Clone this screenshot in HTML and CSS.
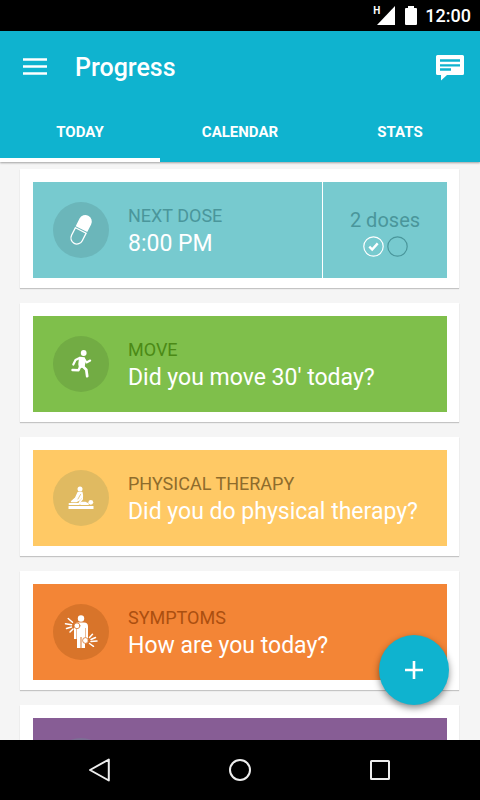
FILE: index.html
```html
<!DOCTYPE html>
<html lang="en">
<head>
  <meta charset="UTF-8">
  <meta name="viewport" content="width=device-width, initial-scale=1">
  <title>Progress</title>
  <link rel="stylesheet" href="styles.css">
</head>
<body>
  <!-- Status bar -->
  <div class="status-bar">
    <span class="network">H</span>
    <svg class="signal" width="18" height="19" viewBox="0 0 18 19"><path d="M18 0v19H0z" fill="#fff"/></svg>
    <svg class="battery" width="12" height="19" viewBox="0 0 12 19"><path d="M3 0h6v2h2q1 0 1 1v15q0 1-1 1H1q-1 0-1-1V3q0-1 1-1h2z" fill="#fff"/></svg>
    <span class="clock">12:00</span>
  </div>

  <header class="header">
    <div class="app-bar">
      <button class="icon-button" type="button" aria-label="Menu">
        <svg width="24" height="20" viewBox="0 0 24 20"><path d="M0 1.500h24M0 8.500h24M0 15.500h24" stroke="#fff" stroke-width="2.700"/></svg>
      </button>
      <h1>Progress</h1>
      <button class="icon-button" type="button" aria-label="Messages">
        <svg width="28" height="26" viewBox="0 0 28 26">
          <path d="M1.500 0h25Q28 0 28 1.500v17q0 1.500-1.500 1.500H11l-6 5.500V20H1.500Q0 20 0 18.500v-17Q0 0 1.500 0z" fill="#fff"/>
          <path d="M4 5.500h20M4 10.300h20M4 14.500h11" stroke="#0fb3cf" stroke-width="2.300"/>
        </svg>
      </button>
    </div>
    <nav class="tabs">
      <a class="tab active" href="#today">TODAY</a>
      <a class="tab" href="#calendar">CALENDAR</a>
      <a class="tab" href="#stats">STATS</a>
    </nav>
  </header>

  <main class="content" id="today">
    <!-- Next dose -->
    <section class="card">
      <div class="tile dose">
        <div class="badge">
          <svg width="56" height="56" viewBox="0 0 56 56">
            <g transform="rotate(27 28 28)">
              <path d="M21.500 27v-8.500a6.500 6.500 0 0 1 13 0V27z" fill="#fff"/>
              <path d="M22 28.500h12V37a6 6 0 0 1-12 0z" fill="none" stroke="#fff" stroke-width="1.300"/>
            </g>
          </svg>
        </div>
        <div class="text">
          <h2>NEXT DOSE</h2>
          <p>8:00 PM</p>
        </div>
        <div class="doses">
          <span class="doses-count">2 doses</span>
          <div class="doses-marks">
            <svg width="21" height="21" viewBox="0 0 21 21"><circle cx="10.500" cy="10.500" r="9.700" fill="none" stroke="#fff" stroke-width="1.200"/><path d="M6.300 10.700l2.900 2.900 5.500-6.200" fill="none" stroke="#fff" stroke-width="2.400"/></svg>
            <svg width="21" height="21" viewBox="0 0 21 21"><circle cx="10.500" cy="10.500" r="9.700" fill="none" stroke="#4a969b" stroke-width="1.200"/></svg>
          </div>
        </div>
      </div>
    </section>

    <!-- Move -->
    <section class="card">
      <div class="tile move">
        <div class="badge">
          <svg width="56" height="56" viewBox="0 0 56 56" fill="none" stroke="#fff" stroke-linecap="round" stroke-linejoin="round">
            <circle cx="30.700" cy="17" r="2.900" fill="#fff" stroke="none"/>
            <path d="M27 21.700l4 .5.300 5-.5 3-4 1-.5-3z" fill="#fff" stroke-width="2"/>
            <path d="M26.500 22l-4 2-2.200 4.500" stroke-width="2.200"/>
            <path d="M31 22.500l2.500 4 3.700-2" stroke-width="2"/>
            <path d="M27.500 30l-2 4.200-6-.2" stroke-width="2.400"/>
            <path d="M29.500 30l3.800 3.700.9 6.500" stroke-width="2.700"/>
          </svg>
        </div>
        <div class="text">
          <h2>MOVE</h2>
          <p>Did you move 30' today?</p>
        </div>
      </div>
    </section>

    <!-- Physical therapy -->
    <section class="card">
      <div class="tile therapy">
        <div class="badge">
          <svg width="56" height="56" viewBox="0 0 56 56" fill="none" stroke="#fff" stroke-linecap="round" stroke-linejoin="round">
            <circle cx="27" cy="19" r="2.500" fill="#fff" stroke="none"/>
            <path d="M25 22.500h4l.5 3.500-3 4-3 1.500h-5l4-3.500z" fill="#fff" stroke-width="1.300"/>
            <path d="M27.500 24.500l-2.500 4.500" stroke="#e0ba61" stroke-width=".8"/>
            <path d="M29 25l.3 4-2.800 3.500" stroke-width="1.500"/>
            <circle cx="37.800" cy="32.300" r="2.400" fill="#fff" stroke="none"/>
            <path d="M16.500 34h9l3-1.200h4l2.500 1.200H28" stroke-width="1.900"/>
            <path d="M15.500 37.500h25" stroke-width="3" stroke-linecap="butt"/>
          </svg>
        </div>
        <div class="text">
          <h2>PHYSICAL THERAPY</h2>
          <p>Did you do physical therapy?</p>
        </div>
      </div>
    </section>

    <!-- Symptoms -->
    <section class="card">
      <div class="tile symptoms">
        <div class="badge">
          <svg width="56" height="56" viewBox="0 0 56 56" fill="none" stroke="#fff" stroke-linecap="round">
            <circle cx="28" cy="14.500" r="3.200" fill="#fff" stroke="none"/>
            <path d="M25 18.500h6q4 0 4 4V35h-2.500V24H32v20h-3.500V33h-1v11H24V24h-.5v11H21V22.500q0-4 4-4z" fill="#fff" stroke="none"/>
            <circle cx="24" cy="21.800" r="2.900" fill="#fff" stroke="#d8742a" stroke-width=".8"/>
            <circle cx="32.500" cy="36.500" r="2.900" fill="#fff" stroke="#d8742a" stroke-width=".8"/>
            <path d="M19.500 18.300l-4.300-3.800M18.500 20.800l-6-1M18.500 23l-5 1.500M20 25l-3 3M36.500 33.500l3-3.300M38 35.500l4.500-2M38 37.500l6-.5M36.500 39.500l4 2.800" stroke-width="1.500"/>
          </svg>
        </div>
        <div class="text">
          <h2>SYMPTOMS</h2>
          <p>How are you today?</p>
        </div>
      </div>
    </section>

    <section class="card">
      <div class="tile more">
        <div class="badge"></div>
      </div>
    </section>
  </main>

  <button class="fab" type="button" aria-label="Add">
    <svg width="18" height="18" viewBox="0 0 18 18"><path d="M9 0v18M0 9h18" stroke="#fff" stroke-width="2.600"/></svg>
  </button>

  <!-- System navigation -->
  <footer class="nav-bar">
    <button type="button" aria-label="Back">
      <svg width="24" height="24" viewBox="0 0 24 24"><path d="M20.800 1.500v21L2 12z" fill="none" stroke="#eee" stroke-width="2" stroke-linejoin="round"/></svg>
    </button>
    <button type="button" aria-label="Home">
      <svg width="24" height="24" viewBox="0 0 24 24"><circle cx="12" cy="12" r="10" fill="none" stroke="#eee" stroke-width="2"/></svg>
    </button>
    <button type="button" aria-label="Recent apps">
      <svg width="24" height="24" viewBox="0 0 24 24"><rect x="3" y="3" width="18" height="18" rx=".5" fill="none" stroke="#eee" stroke-width="2"/></svg>
    </button>
  </footer>
</body>
</html>
```

FILE: styles.css
```css
* {
  box-sizing: border-box;
}
body {
  margin: 0;
  height: 100vh;
  display: flex;
  flex-direction: column;
  overflow: hidden;
  background: #f5f5f5;
  font-family: Roboto, sans-serif;
}
h1, h2, p {
  margin: 0;
}
svg {
  display: block;
}
button {
  padding: 0;
  border: none;
  background: none;
  cursor: pointer;
}

/* status bar */
.status-bar {
  flex: none;
  height: 31px;
  padding: 0 9px;
  display: flex;
  align-items: center;
  justify-content: flex-end;
  background: #000;
  color: #fff;
}
.network {
  align-self: flex-start;
  margin-top: 4px;
  font-size: 10px;
  font-weight: bold;
  line-height: 14px;
}
.signal {
  margin-left: -3px;
}
.battery {
  margin-left: 10px;
}
.clock {
  margin-left: 8px;
  font-size: 18px;
  font-weight: 500;
}

/* header */
.header {
  flex: none;
  z-index: 1;
  background: #0fb3cf;
  color: #fff;
  box-shadow: 0 1px 2px rgba(0,0,0,0.35);
}
.app-bar {
  height: 73px;
  padding: 0 16px 0 23px;
  display: flex;
  align-items: center;
}
.app-bar h1 {
  flex: 1;
  margin-left: 28px;
  font-size: 25px;
  font-weight: 500;
}
.tabs {
  display: flex;
}
.tab {
  flex: 1;
  height: 58px;
  border-bottom: 4px solid transparent;
  color: #fff;
  font-size: 15px;
  font-weight: bold;
  line-height: 56px;
  text-align: center;
  text-decoration: none;
}
.tab.active {
  border-bottom-color: #fff;
}

/* cards */
.content {
  flex: 1;
  min-height: 0;
  overflow: hidden;
  padding: 7px 21px 0 20px;
}
.card {
  margin-bottom: 15px;
  padding: 13px 12px 10px 13px;
  background: #fff;
  box-shadow: 0 1px 1px rgba(0,0,0,0.2);
}
.tile {
  height: 96px;
  padding-left: 20px;
  display: flex;
  align-items: center;
}
.badge {
  flex: none;
  width: 56px;
  height: 56px;
  border-radius: 50%;
}
.text {
  flex: 1;
  margin-left: 19px;
  color: #fff;
}
.text h2 {
  font-size: 18px;
  font-weight: normal;
  line-height: 28px;
}
.text p {
  font-size: 23px;
  line-height: 28px;
}
.dose {
  background: #77cacf;
}
.dose .badge {
  background: #6bb6ba;
}
.dose h2 {
  color: #4a969b;
}
.move {
  background: #7fbf4b;
}
.move .badge {
  background: #72ac44;
}
.move h2 {
  color: #4b8a16;
}
.therapy {
  background: #ffc965;
}
.therapy .badge {
  background: #e0ba61;
}
.therapy h2 {
  color: #8e6c2c;
}
.symptoms {
  background: #f38536;
}
.symptoms .badge {
  background: #d8742a;
}
.symptoms h2 {
  color: #ab4f10;
}
.more {
  background: #875d95;
}
.more .badge {
  background: #7d6f95;
}
.doses {
  align-self: stretch;
  width: 125px;
  padding-top: 4px;
  border-left: 1px solid #fff;
  display: flex;
  flex-direction: column;
  align-items: center;
  justify-content: center;
  gap: 4px;
}
.doses-count {
  color: #4a969b;
  font-size: 20px;
  line-height: 24px;
}
.doses-marks {
  display: flex;
  gap: 3px;
}

/* floating button over the cards */
.fab {
  position: absolute;
  right: 31px;
  bottom: 95px;
  z-index: 2;
  width: 70px;
  height: 70px;
  display: flex;
  align-items: center;
  justify-content: center;
  border-radius: 50%;
  background: #0fb3cf;
  box-shadow: 0 3px 7px rgba(0,0,0,0.45);
}

/* system navigation */
.nav-bar {
  flex: none;
  height: 60px;
  padding: 0 30px;
  display: flex;
  background: #000;
}
.nav-bar button {
  flex: 1;
  display: flex;
  align-items: center;
  justify-content: center;
}
```
